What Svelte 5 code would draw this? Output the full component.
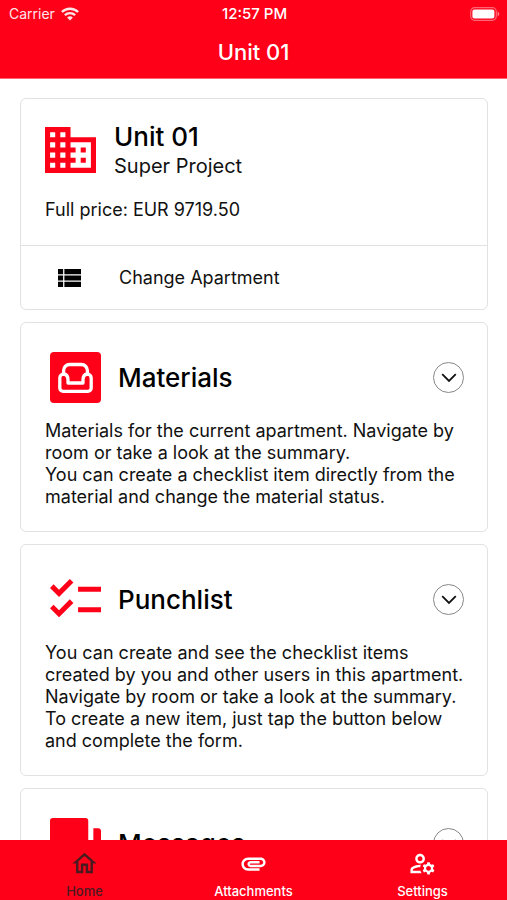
<script>
  const sections = [
    {
      id: 'materials',
      title: 'Materials',
      lines: [
        'Materials for the current apartment. Navigate by room or take a look at the summary.',
        'You can create a checklist item directly from the material and change the material status.',
      ],
    },
    {
      id: 'punchlist',
      title: 'Punchlist',
      lines: [
        'You can create and see the checklist items created by you and other users in this apartment. Navigate by room or take a look at the summary.',
        'To create a new item, just tap the button below and complete the form.',
      ],
    },
    {
      id: 'messages',
      title: 'Messages',
      lines: [],
    },
  ];

  const tabs = [
    {
      label: 'Home',
      active: true,
      path: 'M12 5.69l5 4.5V18h-2v-6H9v6H7v-7.81l5-4.5M12 3L2 12h3v8h6v-6h2v6h6v-8h3L12 3z',
    },
    {
      label: 'Attachments',
      active: false,
      path: 'M2 12.5C2 9.46 4.46 7 7.5 7H18c2.21 0 4 1.79 4 4s-1.79 4-4 4H9.5C8.12 15 7 13.88 7 12.5S8.12 10 9.5 10H17v2H9.41c-.55 0-.55 1 0 1H18c1.1 0 2-.9 2-2s-.9-2-2-2H7.5C5.57 9 4 10.57 4 12.5S5.57 16 7.5 16H17v2H7.5C4.46 18 2 15.54 2 12.5z',
    },
    {
      label: 'Settings',
      active: false,
      path: 'M4 18v-.65c0-.34.16-.66.41-.81C6.1 15.53 8.03 15 10 15c.03 0 .05 0 .08.01.1-.7.3-1.37.59-1.98-.22-.02-.44-.03-.67-.03-2.42 0-4.68.67-6.61 1.82-.88.52-1.39 1.5-1.39 2.53V20h9.26c-.42-.6-.75-1.28-.97-2H4zM10 12c2.21 0 4-1.79 4-4s-1.79-4-4-4-4 1.79-4 4 1.79 4 4 4zm0-6c1.1 0 2 .9 2 2s-.9 2-2 2-2-.9-2-2 .9-2 2-2zM20.75 16c0-.22-.03-.42-.06-.63l1.14-1.01-1-1.73-1.45.49c-.32-.27-.68-.48-1.08-.63L18 11h-2l-.3 1.49c-.4.15-.76.36-1.08.63l-1.45-.49-1 1.73 1.14 1.01c-.03.21-.06.41-.06.63s.03.42.06.63l-1.14 1.01 1 1.73 1.45-.49c.32.27.68.48 1.08.63L16 21h2l.3-1.49c.4-.15.76-.36 1.08-.63l1.45.49 1-1.73-1.14-1.01c.03-.21.06-.41.06-.63zM17 18c-1.1 0-2-.9-2-2s.9-2 2-2 2 .9 2 2-.9 2-2 2z',
    },
  ];
</script>

<div class="app">
  <header>
    <div class="status">
      <span class="carrier">
        Carrier
        <svg width="18" height="14" viewBox="0 0 18 14" fill="none" stroke="currentColor" stroke-width="2.4" aria-hidden="true">
          <path d="M0.9 5a11.6 11.6 0 0 1 16.2 0" />
          <path d="M3.9 8.2a7.3 7.3 0 0 1 10.2 0" />
          <path d="M9 13.6L6.1 10.6a4.2 4.2 0 0 1 5.8 0z" fill="currentColor" stroke="none" />
        </svg>
      </span>
      <span class="time">12:57 PM</span>
      <span class="battery">
        <svg width="30" height="14" viewBox="0 0 30 14" aria-hidden="true">
          <rect x="0.7" y="0.7" width="25.6" height="12.6" rx="4" fill="none" stroke="#fff" stroke-opacity="0.4" stroke-width="1.2" />
          <rect x="2.4" y="2.4" width="22" height="9.2" rx="2" fill="#fff" />
          <path d="M27.6 4.6c2.2.8 2.2 4 0 4.8z" fill="#fff" fill-opacity="0.5" />
        </svg>
      </span>
    </div>
    <h1>Unit 01</h1>
  </header>

  <main>
    <section class="card">
      <div class="overview">
        <div class="unit">
          <svg width="51" height="46" viewBox="2 3 20 18" aria-hidden="true">
            <path fill="#ff0019" d="M12 7V3H2v18h20V7H12zM6 19H4v-2h2v2zm0-4H4v-2h2v2zm0-4H4V9h2v2zm0-4H4V5h2v2zm4 12H8v-2h2v2zm0-4H8v-2h2v2zm0-4H8V9h2v2zm0-4H8V5h2v2zm10 12h-8v-2h2v-2h-2v-2h2v-2h-2V9h8v10zm-2-8h-2v2h2v-2zm0 4h-2v2h2v-2z" />
          </svg>
          <div>
            <h2>Unit 01</h2>
            <p class="project">Super Project</p>
          </div>
        </div>
        <p class="price">Full price: EUR 9719.50</p>
      </div>
      <button class="change" type="button">
        <svg width="23" height="18" viewBox="3 5 18 14" aria-hidden="true">
          <path d="M3 14h4v-4H3v4zm0 5h4v-4H3v4zM3 9h4V5H3v4zm5 5h13v-4H8v4zm0 5h13v-4H8v4zM8 5v4h13V5H8z" />
        </svg>
        Change Apartment
      </button>
    </section>

    {#each sections as section (section.id)}
      <section class="card topic">
        <div class="heading">
          <svg width="51" height="51" viewBox="0 0 51 51" aria-hidden="true">
            {#if section.id === 'materials'}
              <rect width="51" height="51" rx="4" fill="#ff0019" />
              <g fill="none" stroke="#fff" stroke-width="3.3" stroke-linejoin="round">
                <path d="M13.6 22.500v-4a6 6 0 0 1 6-6h11.800a6 6 0 0 1 6 6v4" />
                <path d="M9.800 26a4 4 0 0 1 4-4c3 .5 4.200 3.500 4.200 6v3h15v-3c0-2.500 1.200-5.500 4.200-6a4 4 0 0 1 4 4v10a3.300 3.300 0 0 1-3.300 3.300H13.100a3.300 3.300 0 0 1-3.300-3.300z" />
              </g>
            {:else if section.id === 'punchlist'}
              <path fill="#ff0019" transform="scale(2.55) translate(-2 -2)" d="M22 7h-9v2h9V7zm0 8h-9v2h9v-2zM5.540 11 2 7.460l1.410-1.410 2.120 2.120 4.240-4.240 1.410 1.410L5.540 11zm0 8L2 15.460l1.410-1.410 2.120 2.120 4.240-4.240 1.410 1.410L5.540 19z" />
            {:else}
              <path fill="#ff0019" transform="scale(2.55) translate(-2 -2)" d="M21 6h-2v9H6v2c0 .55.45 1 1 1h11l4 4V7c0-.55-.45-1-1-1zm-4 6V3c0-.55-.45-1-1-1H3c-.55 0-1 .45-1 1v14l4-4h10c.55 0 1-.45 1-1z" />
            {/if}
          </svg>
          <h2>{section.title}</h2>
          <button class="toggle" type="button" aria-label={`Expand ${section.title}`}>
            <svg width="16" height="10" viewBox="0 0 16 10" fill="none" stroke="#111" stroke-width="1.8" aria-hidden="true">
              <path d="M1.200 1.200L8 8l6.800-6.800" />
            </svg>
          </button>
        </div>
        {#each section.lines as line}
          <p>{line}</p>
        {/each}
      </section>
    {/each}
  </main>

  <nav>
    {#each tabs as tab (tab.label)}
      <a href={`#${tab.label.toLowerCase()}`} class:active={tab.active} aria-current={tab.active ? 'page' : undefined}>
        <svg width="29" height="29" viewBox="0 0 24 24" fill="currentColor" aria-hidden="true">
          <path d={tab.path} />
        </svg>
        {tab.label}
      </a>
    {/each}
  </nav>
</div>

<style>
  .app {
    display: flex;
    flex-direction: column;
    height: 100vh;
    background: #fff;
    color: #111;
    font: 18px/22px Inter, 'Liberation Sans', sans-serif;
  }

  h1,
  h2,
  p {
    margin: 0;
  }

  header {
    flex: none;
    background: #ff0019;
    color: #fff;
    padding-bottom: 12px;
    border-bottom: 1px solid #ff6673;
  }

  .status {
    display: grid;
    grid-template-columns: 1fr auto 1fr;
    align-items: center;
    height: 28px;
    padding: 0 7px 0 9px;
    font-size: 15px;
  }

  .carrier {
    display: flex;
    align-items: center;
    gap: 6px;
    color: #ffe5e8;
    font-size: 14px;
  }

  .time {
    font-weight: 500;
  }

  .battery {
    display: flex;
    justify-content: flex-end;
  }

  h1 {
    margin-top: 10px;
    font-size: 22px;
    line-height: 28px;
    font-weight: 500;
    text-align: center;
  }

  main {
    flex: 1;
    min-height: 0;
    overflow: hidden;
    display: flex;
    flex-direction: column;
    gap: 12px;
    padding: 19px 19px 0 20px;
  }

  .card {
    flex: none;
    border: 1px solid #e2e2e2;
    border-radius: 6px;
  }

  .overview {
    padding: 22px 24px 24px;
  }

  .unit {
    display: flex;
    align-items: center;
    gap: 18px;
  }

  h2 {
    color: #000;
    font-size: 26px;
    line-height: 32px;
    font-weight: 500;
  }

  .project {
    font-size: 20px;
    line-height: 26px;
  }

  .price {
    margin-top: 20px;
  }

  .change {
    display: flex;
    align-items: center;
    gap: 38px;
    width: 100%;
    height: 64px;
    padding: 0 37px;
    border: 0;
    border-top: 1px solid #e2e2e2;
    background: none;
    color: inherit;
    font: inherit;
    text-align: left;
  }

  .topic {
    padding: 29px 18px 23px 24px;
  }

  .heading {
    display: flex;
    align-items: center;
    padding: 0 5px;
    margin-bottom: 17px;
    gap: 17px;
  }

  .toggle {
    display: grid;
    place-items: center;
    width: 31px;
    height: 31px;
    margin-left: auto;
    padding: 0;
    border: 1px solid #888;
    border-radius: 50%;
    background: none;
  }

  nav {
    flex: none;
    display: grid;
    grid-template-columns: repeat(3, 1fr);
    height: 60px;
    background: #ff0019;
  }

  a {
    display: flex;
    flex-direction: column;
    align-items: center;
    gap: 4px;
    padding-top: 9px;
    color: #fff;
    font-size: 13px;
    line-height: 18px;
    font-weight: 500;
    text-decoration: none;
  }

  a.active {
    color: #4a1a20;
  }
</style>
